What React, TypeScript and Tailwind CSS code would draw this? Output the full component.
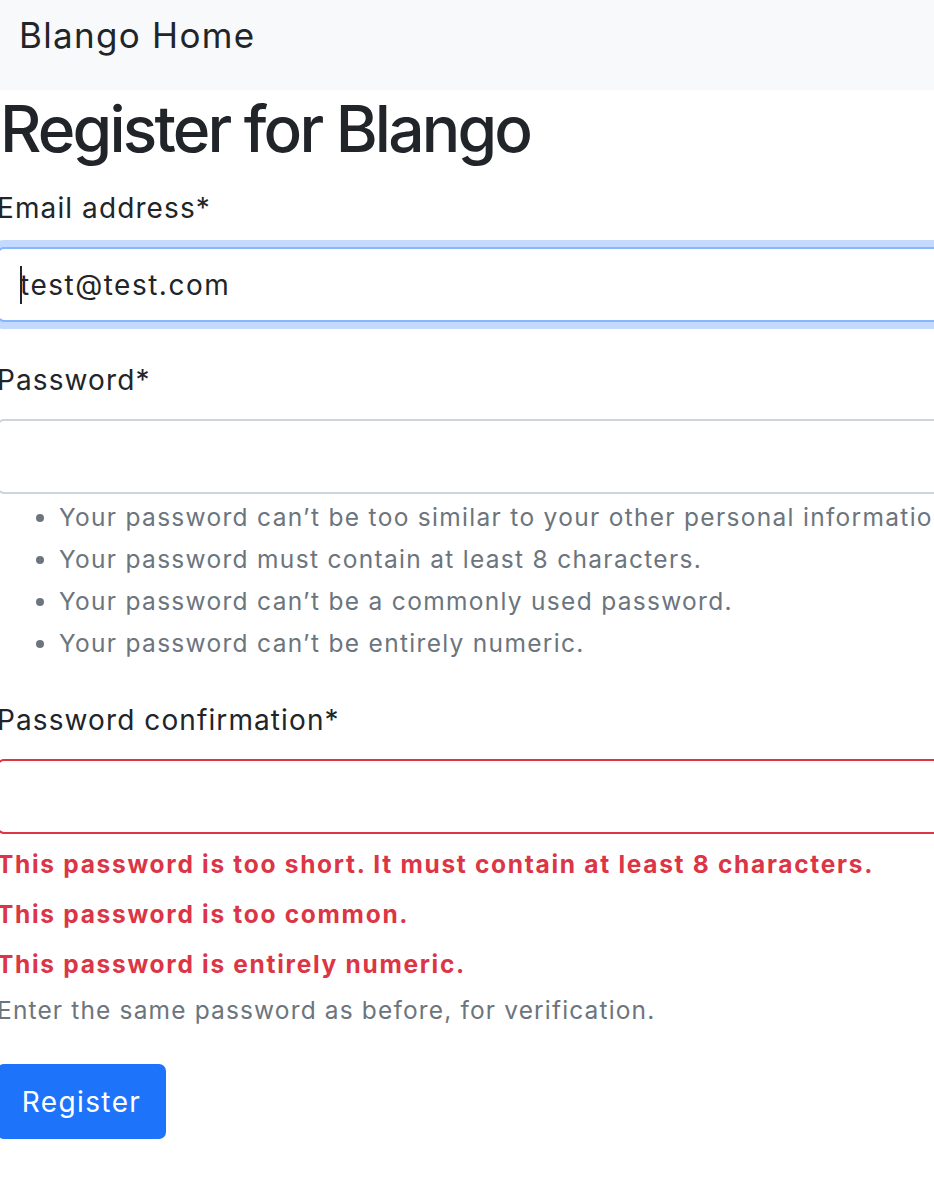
import React from 'react';

const passwordRules = [
  "Your password can’t be too similar to your other personal information.",
  'Your password must contain at least 8 characters.',
  'Your password can’t be a commonly used password.',
  'Your password can’t be entirely numeric.',
];

const confirmErrors = [
  'This password is too short. It must contain at least 8 characters.',
  'This password is too common.',
  'This password is entirely numeric.',
];

export default function App() {
  return (
    <div className="w-full min-h-[1188px] overflow-hidden bg-white text-[#212529]" style={{ fontFamily: 'Inter, "Noto Sans", sans-serif' }}>
      {/* navbar */}
      <nav className="h-[90px] bg-[#f8f9fa] pl-[19px] pt-[9px]">
        <a href="#" className="text-[35px] leading-[52px] tracking-[1.3px] text-[#212529]">Blango Home</a>
      </nav>

      <div className="w-[1200px] ml-[-3px]">
        <h1 className="text-[64px] leading-[77px] font-medium tracking-[-2.8px] pl-[3px]">Register for Blango</h1>

        <form className="mt-[20px]">
          {/* email */}
          <div className="mb-[37px]">
            <label className="block text-[28px] leading-[42px] tracking-[1.1px] mb-[18px]">Email address*</label>
            <div className="relative h-[75px] rounded-[7px] border-2 border-[#86b7fe] bg-white shadow-[0_0_0_7px_#c3dafe] flex items-center pl-[21px]">
              <span className="absolute left-[21px] top-[17px] h-[38px] w-[2px] bg-[#212529]" />
              <span className="text-[28px] leading-[42px] tracking-[1.5px]">test@test.com</span>
            </div>
          </div>

          {/* password */}
          <div className="mb-[35px]">
            <label className="block text-[28px] leading-[42px] tracking-[1.1px] mb-[18px]">Password*</label>
            <div className="h-[75px] rounded-[7px] border-2 border-[#ced4da] bg-white" />
            <ul className="mt-[2px] pl-[62px] list-disc text-[24.5px] leading-[42px] tracking-[1.3px] text-[#6c757d] whitespace-nowrap">
              {passwordRules.map((r) => (
                <li key={r}>{r}</li>
              ))}
            </ul>
          </div>

          {/* confirmation */}
          <div>
            <label className="block text-[28px] leading-[42px] tracking-[1.1px] mb-[18px]">Password confirmation*</label>
            <div className="h-[75px] rounded-[7px] border-2 border-[#dc3545] bg-white" />
            <div className="mt-[5px]">
              {confirmErrors.map((e) => (
                <div key={e} className="text-[24.5px] leading-[50px] font-bold tracking-[1.7px] text-[#dc3545]">{e}</div>
              ))}
            </div>
            <div className="text-[24.5px] leading-[42px] tracking-[1.15px] text-[#6c757d]">Enter the same password as before, for verification.</div>
          </div>

          <button type="button" className="mt-[33px] h-[75px] w-[169px] rounded-[7px] bg-[#1d74fb] text-white text-[28px] tracking-[1.4px]">
            Register
          </button>
        </form>
      </div>
    </div>
  );
}
